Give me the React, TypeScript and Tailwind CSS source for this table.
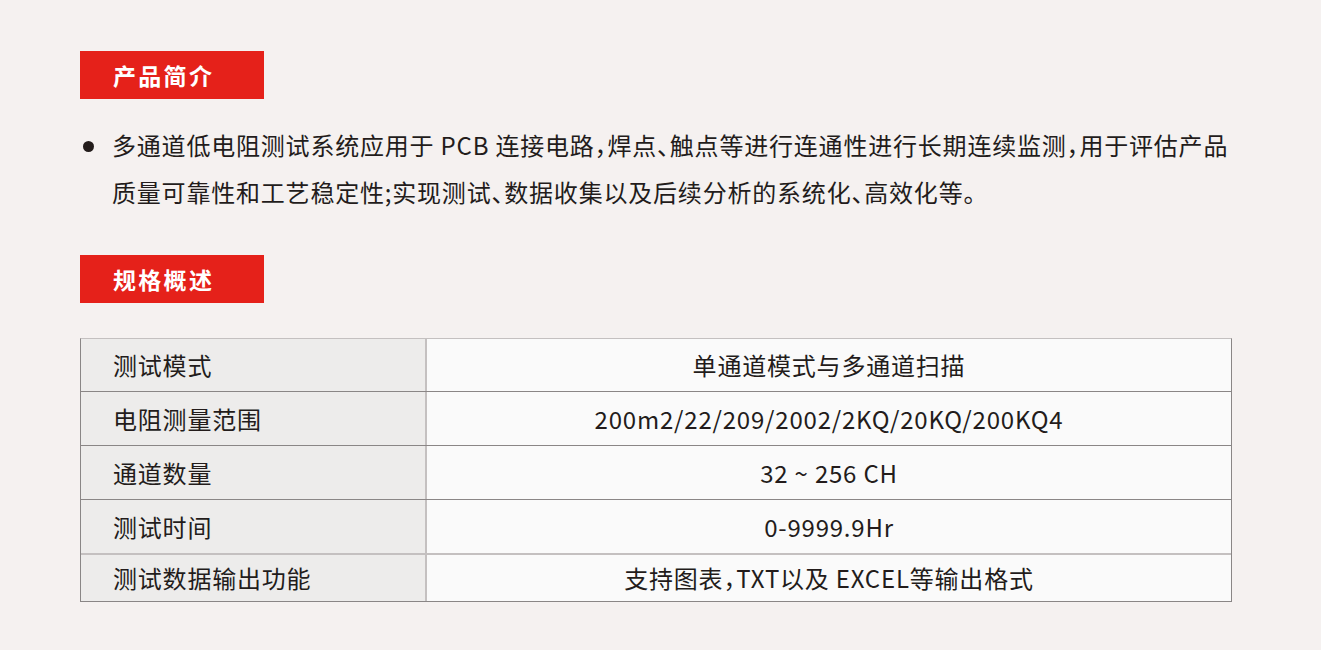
import React from "react";

const rows: [string, string][] = [
  ["测试模式", "单通道模式与多通道扫描"],
  ["电阻测量范围", "200m2/22/209/2002/2KQ/20KQ/200KQ4"],
  ["通道数量", "32 ~ 256 CH"],
  ["测试时间", "0-9999.9Hr"],
  ["测试数据输出功能", "支持图表，TXT以及 EXCEL等输出格式"],
];

function Title({ children }: { children: React.ReactNode }) {
  return (
    <div className="w-[184px] h-[48px] bg-[#e5211a] flex items-center pl-[33px] text-white text-[23px] font-bold tracking-[2.3px]">
      {children}
    </div>
  );
}

const heights = ["h-[52px]", "h-[54px]", "h-[54px]", "h-[54px]", "h-[48px]"];

export default function App() {
  return (
    <div
      className="w-[1321px] h-[650px] bg-[#f5f1f0] text-[#231c1b] pt-[51px] pl-[80px] [font-feature-settings:'halt']"
      style={{ fontFamily: '"Noto Sans CJK SC", "Noto Sans", sans-serif' }}
    >
      <Title>产品简介</Title>
      <div className="flex mt-[22px] w-[1160px]">
        <div className="w-[32px] pt-[20px] shrink-0">
          <div className="w-[11px] h-[11px] rounded-full bg-[#231c1b] ml-[3px]" />
        </div>
        <p className="w-[1122px] text-[24px] leading-[47px] tracking-[0.8px]">
          多通道低电阻测试系统应用于 PCB 连接电路，焊点、触点等进行连通性进行长期连续监测，用于评估产品质量可靠性和工艺稳定性;实现测试、数据收集以及后续分析的系统化、高效化等。
        </p>
      </div>
      <div className="mt-[40px]">
        <Title>规格概述</Title>
      </div>
      <div className="mt-[35px] w-[1152px] border border-[#8a8686] border-t-[#c4c0c0] text-[24px] tracking-[0.8px]">
        {rows.map(([k, v], i) => (
          <div
            key={k}
            className={`flex ${heights[i]} ${
              i > 0 ? (i === 4 ? "border-t-2 border-[#c4c0c0]" : "border-t border-[#8a8686]") : ""
            }`}
          >
            <div className="w-[346px] shrink-0 bg-[#edeceb] border-r-2 border-[#c4c0c0] flex items-center pl-[32px]">
              {k}
            </div>
            <div className="flex-1 bg-[#fafafa] flex items-center justify-center">{v}</div>
          </div>
        ))}
      </div>
    </div>
  );
}
